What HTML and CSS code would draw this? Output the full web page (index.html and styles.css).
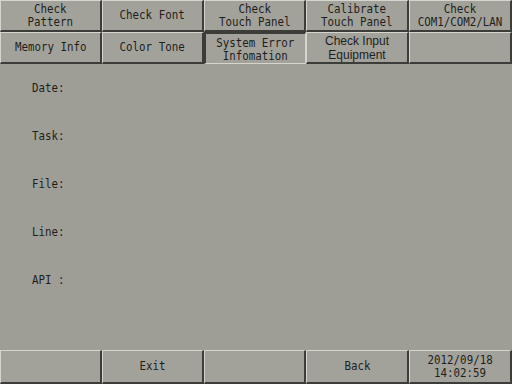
FILE: index.html
```html
<!DOCTYPE html>
<html lang="en">
  <head>
    <meta charset="UTF-8" />
    <title>System Error Infomation</title>
    <link rel="stylesheet" href="styles.css">
  </head>
  <body>
    <div class="screen">
      <div class="menu">
        <button class="key"><span class="label">Check<br>Pattern</span></button>
        <button class="key"><span class="label">Check Font</span></button>
        <button class="key"><span class="label">Check<br>Touch Panel</span></button>
        <button class="key"><span class="label">Calibrate<br>Touch Panel</span></button>
        <button class="key"><span class="label">Check<br>COM1/COM2/LAN</span></button>
        <button class="key"><span class="label">Memory Info</span></button>
        <button class="key"><span class="label">Color Tone</span></button>
        <button class="key pressed"><span class="label">System Error<br>Infomation</span></button>
        <button class="key sans">Check Input<br>Equipment</button>
        <button class="key"></button>
      </div>

      <div class="info">
        <div class="field"><span class="label">Date:</span></div>
        <div class="field"><span class="label">Task:</span></div>
        <div class="field"><span class="label">File:</span></div>
        <div class="field"><span class="label">Line:</span></div>
        <div class="field"><span class="label">API :</span></div>
      </div>

      <div class="footer">
        <button class="key"></button>
        <button class="key"><span class="label">Exit</span></button>
        <button class="key"></button>
        <button class="key"><span class="label">Back</span></button>
        <div class="key clock"><span class="label">2012/09/18<br>14:02:59</span></div>
      </div>
    </div>
  </body>
</html>
```

FILE: styles.css
```css
body {
  margin: 0;
  padding: 0;
  background-color: #9f9e96;
  font-family: "DejaVu Sans Mono", monospace;
  font-size: 12px;
  color: #1e1e1c;
}

.screen {
  width: 512px;
  height: 384px;
  display: flex;
  flex-direction: column;
  overflow: hidden;
}

.menu {
  display: grid;
  grid-template-columns: 102px 102px 102px 103px 103px;
  grid-template-rows: 32px 32px;
}

.key {
  box-sizing: border-box;
  margin: 0;
  padding: 0;
  background-color: #a3a29a;
  border-style: solid;
  border-width: 1px 2px 2px 1px;
  border-color: #d6d5cd #3c3c38 #3c3c38 #d6d5cd;
  font-family: inherit;
  font-size: 12px;
  line-height: 13px;
  color: #1e1e1c;
  display: flex;
  align-items: center;
  justify-content: center;
  text-align: center;
}

/* the panel font is tall and narrow */
.label {
  display: inline-block;
  white-space: nowrap;
  transform: scaleX(0.9);
  transform-origin: center;
}

.key.pressed {
  border-width: 2px 1px 1px 2px;
  border-color: #3c3c38 #d6d5cd #d6d5cd #3c3c38;
  padding-top: 2px;
}

.key.sans {
  font-family: "Liberation Sans", Arial, sans-serif;
  font-size: 12px;
  line-height: 14px;
}

.info {
  flex: 1;
  display: flex;
  flex-direction: column;
  gap: 35px;
  padding: 18px 0 0 32px;
}

.field {
  height: 13px;
  line-height: 13px;
}

.field .label {
  transform-origin: left center;
}

.footer {
  display: grid;
  grid-template-columns: 102px 102px 102px 103px 103px;
  height: 34px;
}

.clock {
  line-height: 13px;
  padding-top: 1px;
}
```
